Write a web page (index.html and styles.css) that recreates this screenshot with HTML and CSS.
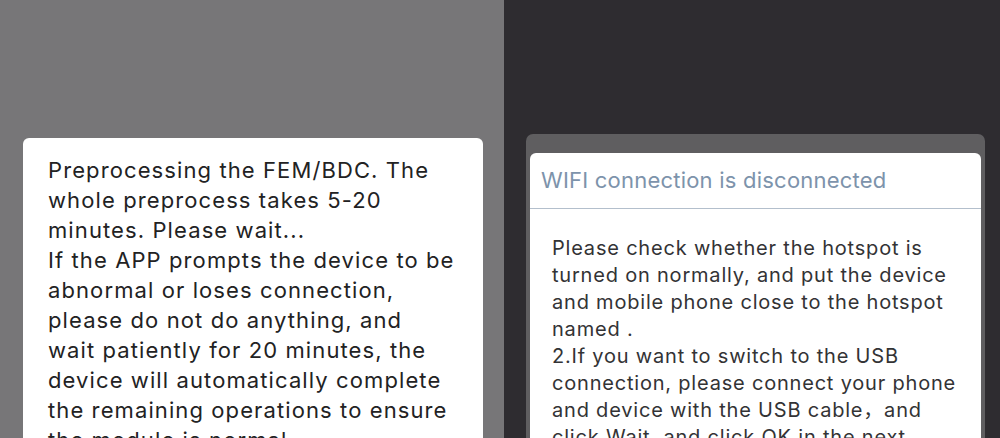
FILE: index.html
```html
<!DOCTYPE html>
<html lang="en">
<head>
<meta charset="utf-8">
<title>Dialogs</title>
<link rel="stylesheet" href="styles.css">
</head>
<body>
<div class="screens">
  <section class="pane pane-left">
    <div class="card">
      <p class="msg">Preprocessing the FEM/BDC. The<br>whole preprocess takes 5-20<br>minutes. Please wait...<br>If the APP prompts the device to be<br>abnormal or loses connection,<br>please do not do anything, and<br>wait patiently for 20 minutes, the<br>device will automatically complete<br>the remaining operations to ensure<br>the module is normal.</p>
    </div>
  </section>
  <section class="pane pane-right">
    <div class="sheet">
      <div class="dialog">
        <div class="dialog-head">WIFI connection is disconnected</div>
        <p class="dialog-body">Please check whether the hotspot is<br>turned on normally, and put the device<br>and mobile phone close to the hotspot<br>named .<br>2.If you want to switch to the USB<br>connection, please connect your phone<br>and device with the USB cable，and<br>click Wait, and click OK in the next<br>dialog.</p>
      </div>
    </div>
  </section>
</div>
</body>
</html>
```

FILE: styles.css
```css
html, body {
  margin: 0;
  padding: 0;
  height: 438px;
  overflow: hidden;
  font-family: "Inter", "Noto Sans CJK SC", "Noto Sans", sans-serif;
}

.screens {
  display: flex;
  height: 438px;
}

.pane {
  height: 100%;
  box-sizing: border-box;
}

.pane-left {
  width: 504px;
  background: #777678;
  padding: 138px 0 0 23px;
}

.card {
  width: 460px;
  height: 300px;
  background: #ffffff;
  border-radius: 6px 6px 0 0;
  box-sizing: border-box;
  padding: 17px 0 0 25px;
}

.msg {
  margin: 0;
  font-size: 22px;
  line-height: 30px;
  letter-spacing: 1.1px;
  color: #222223;
  white-space: nowrap;
}

.pane-right {
  flex: 1;
  background: #2e2c30;
  padding: 134px 0 0 22px;
}

.sheet {
  width: 459px;
  height: 304px;
  background: #5f5e60;
  border-radius: 7px 7px 0 0;
  box-sizing: border-box;
  padding: 19px 4px 0;
}

.dialog {
  background: #ffffff;
  border-radius: 6px 6px 0 0;
  height: 100%;
}

.dialog-head {
  padding: 14px 0 14px 11px;
  font-size: 22px;
  line-height: 27px;
  letter-spacing: 0.22px;
  color: #7d93ab;
  border-bottom: 1px solid #b3bfcc;
}

.dialog-body {
  margin: 0;
  padding: 26px 0 0 22px;
  font-size: 20px;
  line-height: 27px;
  letter-spacing: 0.8px;
  color: #333335;
  white-space: nowrap;
}
```
